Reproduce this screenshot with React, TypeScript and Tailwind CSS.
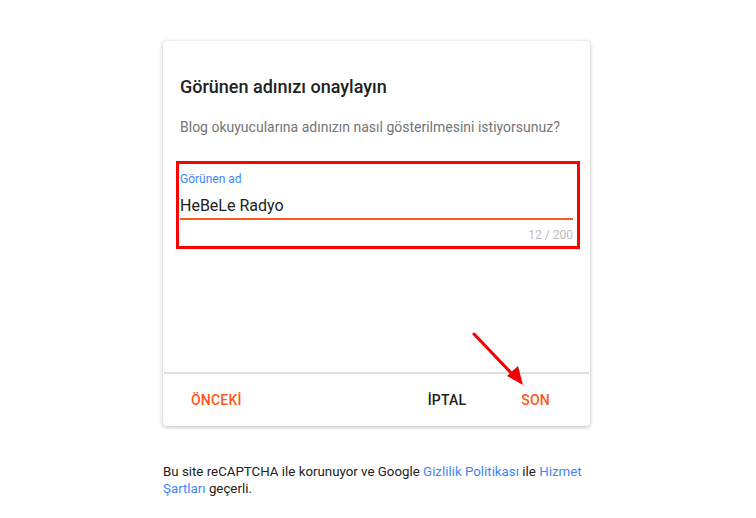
import React from "react";

const font = { fontFamily: "Roboto, 'Liberation Sans', Arial, sans-serif" };

function DisplayNameField({ value, max }: { value: string; max: number }) {
  return (
    <div className="ml-[-4px] mr-[-7px] border-[3px] border-[#ff0000] pl-[1px] pr-[4px] pt-[7px] pb-[3px]">
      <label className="block text-[12px] leading-[16px] text-[#4285f4]">Görünen ad</label>
      <div className="mt-[7px] text-[16px] leading-[24px] text-[#212121]">{value}</div>
      <div className="h-[2px] bg-[#ff5722]" />
      <div className="mt-[7px] text-right text-[12px] leading-[16px] text-[#bdbdbd]">
        {value.length} / {max}
      </div>
    </div>
  );
}

export default function App() {
  return (
    <div className="min-h-screen bg-white pt-[41px] pr-[3px]" style={font}>
      <div className="relative mx-auto w-[427px] rounded bg-white shadow-[0_1px_4px_rgba(0,0,0,0.28)]">
        <div className="px-[17px] pt-[34px]">
          <h1 className="text-[18px] font-medium leading-[24px] text-[#212121]">Görünen adınızı onaylayın</h1>
          <p className="mt-[18px] text-[14px] leading-[20px] text-[#757575]">
            Blog okuyucularına adınızın nasıl gösterilmesini istiyorsunuz?
          </p>
          <div className="mt-[24px]">
            <DisplayNameField value="HeBeLe Radyo" max={200} />
          </div>
        </div>
        <div className="mx-[1px] mt-[123px] h-[2px] bg-[#e0e0e0]" />
        <div className="flex h-[52px] items-center pl-[28px] pr-[40px] text-[14px] font-medium tracking-[0.2px]">
          <button className="text-[#ff5722]">ÖNCEKİ</button>
          <button className="ml-auto text-[#212121]">İPTAL</button>
          <button className="ml-[55px] text-[#ff5722]">SON</button>
        </div>
        <svg
          className="pointer-events-none absolute left-[308px] top-[290px]"
          width="56"
          height="58"
          viewBox="0 0 56 58"
        >
          <line x1="3" y1="3" x2="45" y2="47" stroke="#f00000" strokeWidth="3" strokeLinecap="round" />
          <polygon points="52,54 36,45 47,35" fill="#f00000" />
        </svg>
      </div>
      <p className="mx-auto mt-[37px] w-[427px] pr-[4px] text-[13.3px] leading-[17px] text-[#212121]">
        Bu site reCAPTCHA ile korunuyor ve Google{" "}
        <a className="text-[#4285f4]">Gizlilik Politikası</a> ile{" "}
        <a className="text-[#4285f4]">Hizmet Şartları</a> geçerli.
      </p>
    </div>
  );
}
